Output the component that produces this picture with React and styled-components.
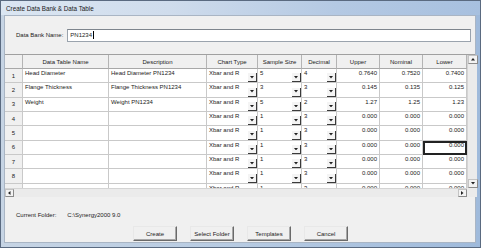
import React from "react";
import styled, { createGlobalStyle } from "styled-components";

const Global = createGlobalStyle`
  html, body { margin: 0; padding: 0; background: #ffffff; }
  body { font-family: "Liberation Sans", Arial, sans-serif; }
`;

const Window = styled.div`
  width: 481px;
  height: 248px;
  box-sizing: border-box;
  display: flex;
  flex-direction: column;
  background: linear-gradient(to right, #c6d4e4 0%, #b7cbe2 50%, #9fbadb 100%);
  border: 1px solid #5a6a80;
  padding: 0 4px 4px 3px;
`;

const TitleBar = styled.div`
  height: 14px;
  display: flex;
  align-items: center;
  padding-left: 2px;
  font-size: 6.3px;
  color: #1a1a1a;
  background: linear-gradient(to right, #dbe6f2 0%, #cfdcec 35%, #b4c9e3 70%, #a7c0df 100%);
  margin: 0 -4px 0 -3px;
  padding-left: 5px;
`;

const Client = styled.div`
  flex: 1;
  background: #f0f0f0;
  display: flex;
  flex-direction: column;
  border: 1px solid #a9b5c4;
  font-size: 6px;
  color: #222;
`;

const NameRow = styled.div`
  display: flex;
  align-items: center;
  height: 14px;
  margin: 12px 0 0 11px;
  gap: 4px;
`;

const Label = styled.span`
  white-space: nowrap;
  color: #222;
`;

const NameInput = styled.div`
  width: 404px;
  height: 13px;
  box-sizing: border-box;
  background: #fff;
  border: 1px solid #9aa3ad;
  border-top-color: #7e858d;
  display: flex;
  align-items: center;
  padding-left: 2px;
`;

const Caret = styled.span`
  display: inline-block;
  width: 1px;
  height: 8px;
  background: #000;
  margin-left: 0.5px;
`;

const GridFrame = styled.div`
  margin-top: 12px;
  display: grid;
  grid-template-columns: 462px 10px;
  grid-template-rows: 133px 9px;
  border-top: 1px solid #a0a0a0;
`;

const TableArea = styled.div`
  overflow: hidden;
  background: #fff;
`;

const COLS = "18px 86px 98px 51px 44px 35px 43px 43px 44px";

const Row = styled.div`
  display: grid;
  grid-template-columns: ${COLS};
  height: ${(p) => (p.$header ? "14px" : "14.35px")};
`;

const Cell = styled.div`
  box-sizing: border-box;
  border-right: 1px solid ${(p) => (p.$header ? "#b4b4b4" : "#c9c9c9")};
  border-bottom: 1px solid ${(p) => (p.$header ? "#a8a8a8" : "#c9c9c9")};
  background: ${(p) => (p.$header || p.$num ? "#f0f0f0" : "#fff")};
  display: flex;
  align-items: ${(p) => (p.$header || p.$num ? "center" : "flex-start")};
  justify-content: ${(p) =>
    p.$header || p.$num ? "center" : p.$right ? "flex-end" : "space-between"};
  padding: ${(p) => (p.$header || p.$num ? "0" : "1px 2px 0 2px")};
  white-space: nowrap;
  overflow: hidden;
  position: relative;
  color: #222;
  outline: ${(p) => (p.$selected ? "2px solid #222" : "none")};
  outline-offset: -2px;
`;

const ComboText = styled.span`
  padding-top: 0;
`;

const DropButton = styled.span`
  align-self: flex-end;
  width: 9px;
  height: 9px;
  margin: 0 -2px 0 0;
  box-sizing: border-box;
  background: #f4f4f4;
  border-right: 1px solid #3a3a3a;
  border-bottom: 1px solid #3a3a3a;
  display: flex;
  align-items: center;
  justify-content: center;
`;

const ScrollV = styled.div`
  background: #ebebeb;
  border-left: 1px solid #d4d4d4;
  display: flex;
  flex-direction: column;
  justify-content: space-between;
`;

const ScrollH = styled.div`
  background: #ebebeb;
  border-top: 1px solid #d4d4d4;
  display: flex;
  justify-content: space-between;
`;

const Corner = styled.div`
  background: #ebebeb;
`;

const ArrowBtn = styled.div`
  width: ${(p) => (p.$h ? "9px" : "10px")};
  height: ${(p) => (p.$h ? "8px" : "9px")};
  box-sizing: border-box;
  background: #f3f3f3;
  border: 1px solid #c4c4c4;
  border-right-color: #8a8a8a;
  border-bottom-color: #8a8a8a;
  display: flex;
  align-items: center;
  justify-content: center;
`;

const FolderRow = styled.div`
  display: flex;
  gap: 11px;
  margin: 14px 0 0 11px;
  height: 8px;
  align-items: center;
`;

const ButtonRow = styled.div`
  display: flex;
  gap: 13px;
  margin: 7px 0 0 128px;
`;

const Button = styled.div`
  width: 44px;
  height: 15px;
  box-sizing: border-box;
  background: #f0f0f0;
  border: 1px solid #e8e8e8;
  border-right-color: #6a6a6a;
  border-bottom-color: #6a6a6a;
  box-shadow: inset -1px -1px 0 #a8a8a8;
  display: flex;
  align-items: center;
  justify-content: center;
  color: #222;
`;

const Tri = ({ dir = "down", size = 4 }) => {
  const pts = {
    down: "0,0 4,0 2,2.5",
    up: "0,2.5 4,2.5 2,0",
    left: "2.5,0 2.5,4 0,2",
    right: "0,0 0,4 2.5,2",
  }[dir];
  const vb = dir === "down" || dir === "up" ? "0 0 4 2.5" : "0 0 2.5 4";
  const w = dir === "down" || dir === "up" ? size : size * 0.625;
  const h = dir === "down" || dir === "up" ? size * 0.625 : size;
  return (
    <svg width={w} height={h} viewBox={vb}>
      <polygon points={pts} fill="#222" />
    </svg>
  );
};

const headers = [
  "",
  "Data Table Name",
  "Description",
  "Chart Type",
  "Sample Size",
  "Decimal",
  "Upper",
  "Nominal",
  "Lower",
];

const rows = [
  ["1", "Head Diameter", "Head Diameter PN1234", "Xbar and R", "5", "4", "0.7640", "0.7520", "0.7400"],
  ["2", "Flange Thickness", "Flange Thickness PN1234", "Xbar and R", "3", "3", "0.145", "0.135", "0.125"],
  ["3", "Weight", "Weight PN1234", "Xbar and R", "5", "2", "1.27", "1.25", "1.23"],
  ["4", "", "", "Xbar and R", "1", "3", "0.000", "0.000", "0.000"],
  ["5", "", "", "Xbar and R", "1", "3", "0.000", "0.000", "0.000"],
  ["6", "", "", "Xbar and R", "1", "3", "0.000", "0.000", "0.000"],
  ["7", "", "", "Xbar and R", "1", "3", "0.000", "0.000", "0.000"],
  ["8", "", "", "Xbar and R", "1", "3", "0.000", "0.000", "0.000"],
  ["9", "", "", "Xbar and R", "1", "3", "0.000", "0.000", "0.000"],
];

const Combo = ({ text }) => (
  <>
    <ComboText>{text}</ComboText>
    <DropButton>
      <Tri dir="down" size={4} />
    </DropButton>
  </>
);

export default function App() {
  return (
    <>
      <Global />
      <Window>
        <TitleBar>Create Data Bank &amp; Data Table</TitleBar>
        <Client>
          <NameRow>
            <Label>Data Bank Name:</Label>
            <NameInput>
              PN1234
              <Caret />
            </NameInput>
          </NameRow>
          <GridFrame>
            <TableArea>
              <Row $header>
                {headers.map((h, i) => (
                  <Cell key={i} $header>
                    {h}
                  </Cell>
                ))}
              </Row>
              {rows.map((r, ri) => (
                <Row key={ri}>
                  <Cell $num>{r[0]}</Cell>
                  <Cell>{r[1]}</Cell>
                  <Cell>{r[2]}</Cell>
                  <Cell>
                    <Combo text={r[3]} />
                  </Cell>
                  <Cell>
                    <Combo text={r[4]} />
                  </Cell>
                  <Cell>
                    <Combo text={r[5]} />
                  </Cell>
                  <Cell $right>{r[6]}</Cell>
                  <Cell $right>{r[7]}</Cell>
                  <Cell $right $selected={ri === 5}>
                    {r[8]}
                  </Cell>
                </Row>
              ))}
            </TableArea>
            <ScrollV>
              <ArrowBtn>
                <Tri dir="up" size={4} />
              </ArrowBtn>
              <ArrowBtn>
                <Tri dir="down" size={4} />
              </ArrowBtn>
            </ScrollV>
            <ScrollH>
              <ArrowBtn $h>
                <Tri dir="left" size={4} />
              </ArrowBtn>
              <ArrowBtn $h>
                <Tri dir="right" size={4} />
              </ArrowBtn>
            </ScrollH>
            <Corner />
          </GridFrame>
          <FolderRow>
            <Label>Current Folder:</Label>
            <Label>C:\Synergy2000 9.0</Label>
          </FolderRow>
          <ButtonRow>
            <Button>Create</Button>
            <Button>Select Folder</Button>
            <Button>Templates</Button>
            <Button>Cancel</Button>
          </ButtonRow>
        </Client>
      </Window>
    </>
  );
}
